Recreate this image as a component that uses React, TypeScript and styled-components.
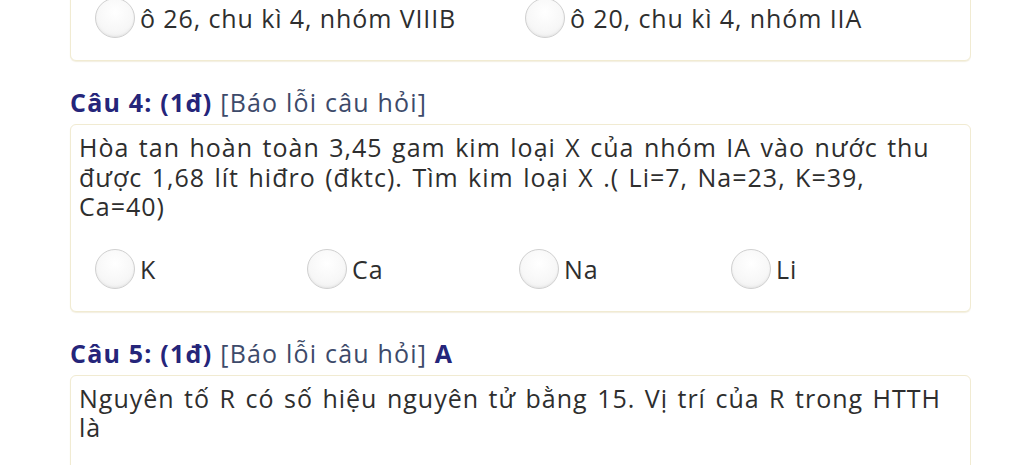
import React from "react";
import styled, { createGlobalStyle } from "styled-components";

const Global = createGlobalStyle`
  html, body { margin: 0; padding: 0; background: #ffffff; }
  body { font-family: "Open Sans", "Noto Sans", sans-serif; color: #2e2e2e; overflow: hidden; }
`;

const Page = styled.div`
  width: 901px;
  padding-left: 70px;
  height: 465px;
  overflow: hidden;
`;

const Card = styled.div<{ $top?: number }>`
  border: 1.5px solid #f1ebd2;
  border-radius: 6px;
  background: #fff;
  box-shadow: 0 1px 1px rgba(220, 210, 170, 0.35);
  margin-top: ${(p) => p.$top ?? 0}px;
`;

const QuestionText = styled.div`
  padding: 8px 22px 0 8px;
  font-size: 25px;
  letter-spacing: 1px;
  word-spacing: 2px;
  line-height: 29.5px;
  color: #2e2e2e;
`;

const Options = styled.div<{ $col: number; $pt: number; $pb: number }>`
  display: grid;
  grid-template-columns: repeat(auto-fill, ${(p) => p.$col}px);
  padding: ${(p) => p.$pt}px 0 ${(p) => p.$pb}px 24px;
`;

const Option = styled.label`
  display: flex;
  align-items: center;
  gap: 5px;
  font-size: 25px;
  letter-spacing: 0.9px;
  color: #2e2e2e;
`;

const Radio = styled.span`
  width: 38px;
  height: 38px;
  border-radius: 50%;
  border: 1.5px solid #d0d0d0;
  background: radial-gradient(circle at 50% 35%, #ffffff 0%, #f7f7f7 60%, #ebebeb 100%);
  box-shadow: inset 0 -1px 2px rgba(0, 0, 0, 0.05);
  flex: none;
`;

const Header = styled.div`
  margin-top: 26px;
  margin-bottom: 7px;
  line-height: 30px;
  font-size: 25px;
  letter-spacing: 1.2px;
`;

const Title = styled.span`
  font-weight: 700;
  color: #25257a;
`;

const Report = styled.span`
  color: #3d4a6a;
`;

const Answer = styled.span`
  font-weight: 700;
  color: #25257a;
`;

export default function App() {
  return (
    <>
      <Global />
      <Page>
        <Card $top={-20}>
          <Options $col={430} $pt={17} $pb={22}>
            <Option><Radio />ô 26, chu kì 4, nhóm VIIIB</Option>
            <Option><Radio />ô 20, chu kì 4, nhóm IIA</Option>
          </Options>
        </Card>

        <Header>
          <Title>Câu 4: (1đ)</Title> <Report>[Báo lỗi câu hỏi]</Report>
        </Header>
        <Card>
          <QuestionText>
            Hòa tan hoàn toàn 3,45 gam kim loại X của nhóm IA vào nước thu được 1,68 lít hiđro (đktc). Tìm kim loại X .( Li=7, Na=23, K=39, Ca=40)
          </QuestionText>
          <Options $col={212} $pt={27} $pb={22}>
            <Option><Radio />K</Option>
            <Option><Radio />Ca</Option>
            <Option><Radio />Na</Option>
            <Option><Radio />Li</Option>
          </Options>
        </Card>

        <Header>
          <Title>Câu 5: (1đ)</Title> <Report>[Báo lỗi câu hỏi]</Report> <Answer>A</Answer>
        </Header>
        <Card>
          <QuestionText>
            Nguyên tố R có số hiệu nguyên tử bằng 15. Vị trí của R trong HTTH là
          </QuestionText>
          <Options $col={212} $pt={27} $pb={22} />
        </Card>
      </Page>
    </>
  );
}
